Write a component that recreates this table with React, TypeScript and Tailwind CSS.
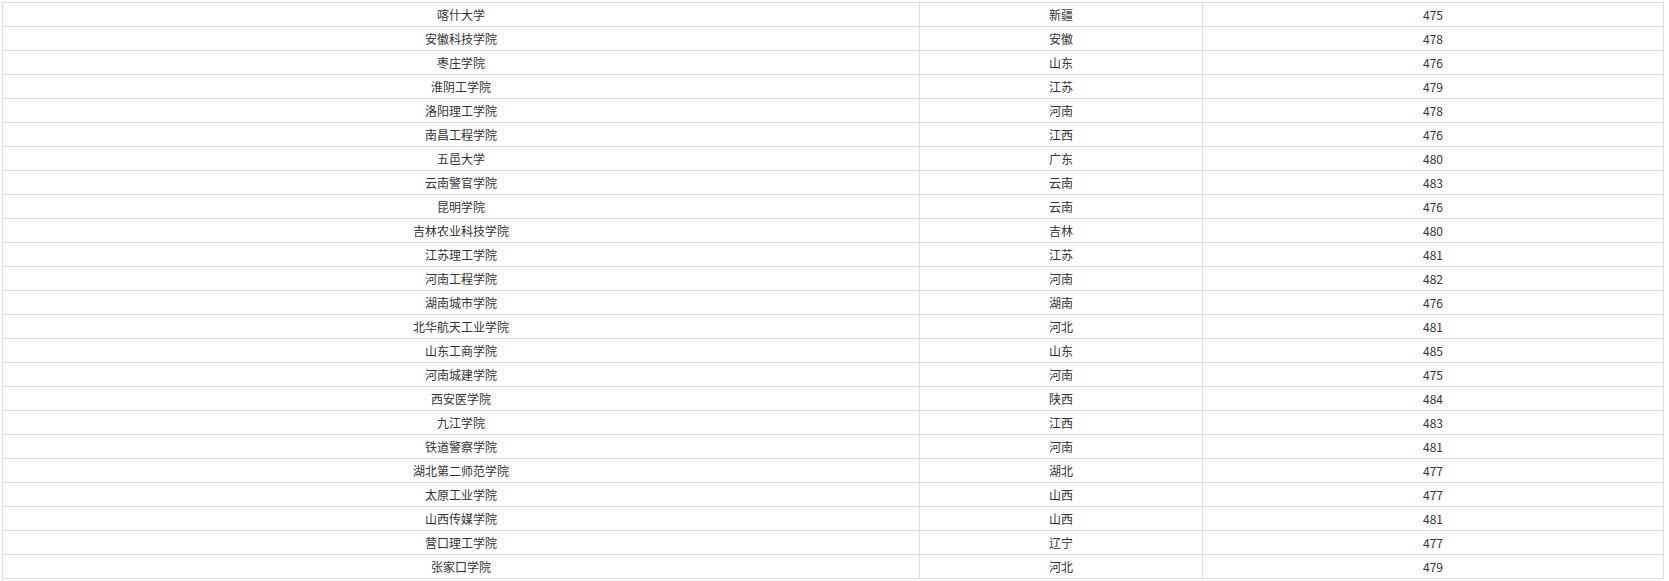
import React from 'react';

const rows: [string, string, number][] = [
    ['喀什大学', '新疆', 475],
    ['安徽科技学院', '安徽', 478],
    ['枣庄学院', '山东', 476],
    ['淮阴工学院', '江苏', 479],
    ['洛阳理工学院', '河南', 478],
    ['南昌工程学院', '江西', 476],
    ['五邑大学', '广东', 480],
    ['云南警官学院', '云南', 483],
    ['昆明学院', '云南', 476],
    ['吉林农业科技学院', '吉林', 480],
    ['江苏理工学院', '江苏', 481],
    ['河南工程学院', '河南', 482],
    ['湖南城市学院', '湖南', 476],
    ['北华航天工业学院', '河北', 481],
    ['山东工商学院', '山东', 485],
    ['河南城建学院', '河南', 475],
    ['西安医学院', '陕西', 484],
    ['九江学院', '江西', 483],
    ['铁道警察学院', '河南', 481],
    ['湖北第二师范学院', '湖北', 477],
    ['太原工业学院', '山西', 477],
    ['山西传媒学院', '山西', 481],
    ['营口理工学院', '辽宁', 477],
    ['张家口学院', '河北', 479],
];

const cell = 'border-r border-[#dddddd] flex items-center justify-center';

const App: React.FC = () => {
    return (
        <div className="min-h-screen bg-white pt-[2px] pl-[2px]">
            <div
                className="w-[1662px] border-l border-t border-[#dddddd] text-[12px] text-[#333333]"
                style={{ fontFamily: '"Microsoft YaHei", "Noto Sans CJK SC", sans-serif' }}
            >
                {rows.map(([school, province, score]) => (
                    <div key={school} className="grid grid-cols-[917px_283px_461px] h-[24px] border-b border-[#dddddd]">
                        <div className={cell}>{school}</div>
                        <div className={cell}>{province}</div>
                        <div className={cell}>{score}</div>
                    </div>
                ))}
            </div>
        </div>
    );
};

export default App;
